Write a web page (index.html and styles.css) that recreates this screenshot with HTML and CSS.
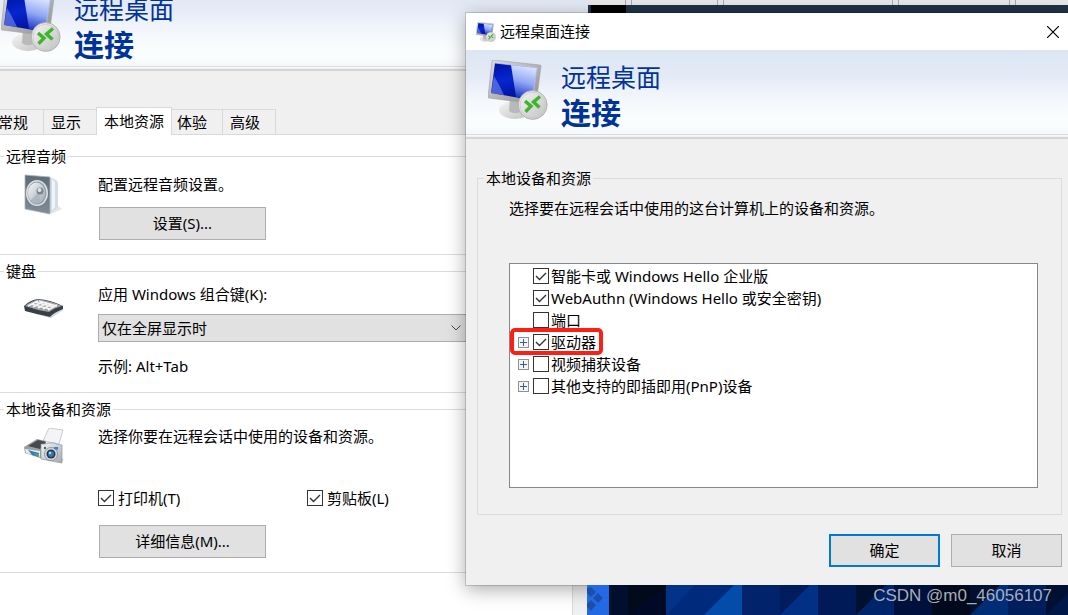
FILE: index.html
```
<!DOCTYPE html>
<html lang="zh-CN">

<head>
    <meta charset="UTF-8">
    <meta name="viewport" content="width=device-width, initial-scale=1.0">
    <title>远程桌面连接</title>
    <link rel="stylesheet" href="styles.css">
</head>

<body>
    <!-- 公用图标 -->
    <svg class="defs" width="0" height="0" aria-hidden="true">
        <defs>
            <linearGradient id="frame" x1="0" y1="0" x2="1" y2="1">
                <stop offset="0" stop-color="#dedede" />
                <stop offset="1" stop-color="#8c8c8c" />
            </linearGradient>
            <linearGradient id="blue" x1="0" y1="0" x2="0.4" y2="1">
                <stop offset="0" stop-color="#0012a0" />
                <stop offset="0.5" stop-color="#0626cf" />
                <stop offset="1" stop-color="#02109b" />
            </linearGradient>
            <linearGradient id="shine" x1="0.6" y1="0" x2="0.4" y2="1">
                <stop offset="0" stop-color="#dfe8ff" />
                <stop offset="0.5" stop-color="#8fa6f4" />
                <stop offset="1" stop-color="#1029c0" />
            </linearGradient>
            <linearGradient id="ball" x1="0" y1="0" x2="1" y2="1">
                <stop offset="0" stop-color="#f6f6f6" />
                <stop offset="1" stop-color="#c0c0c0" />
            </linearGradient>
            <linearGradient id="metal" x1="0" y1="0" x2="1" y2="1">
                <stop offset="0" stop-color="#f4f6f8" />
                <stop offset="1" stop-color="#a2aab3" />
            </linearGradient>
            <linearGradient id="slate" x1="0" y1="0" x2="0" y2="1">
                <stop offset="0" stop-color="#5f6c75" />
                <stop offset="1" stop-color="#7d8c97" />
            </linearGradient>
            <symbol id="rdp" viewBox="0 0 60 60">
                <ellipse cx="27" cy="50" rx="16" ry="9" fill="url(#ball)" />
                <path d="M22 38l14 4-2 9c-4 3-9 3-13 0z" fill="#b9b9b9" />
                <path d="M5 0L52 5q1 0 1 1L48 44 1 38q-1 0-1-1L4 1q0-1 1-1z" fill="url(#frame)" stroke="#a0a0a0" stroke-width="0.6" />
                <path d="M7 3L49 8 44 40 3 33z" fill="url(#blue)" />
                <path d="M23 5L49 8 44 40 28 37z" fill="url(#shine)" />
                <path d="M6 16q5 8 10 19L3 33z" fill="#7186e6" opacity="0.65" />
                <path d="M7 3L49 8 44 40" fill="none" stroke="#c5d3fb" stroke-width="0.7" />
                <circle cx="44.7" cy="45" r="14.4" fill="url(#ball)" stroke="#a8a8a8" stroke-width="0.8" />
                <circle cx="44.7" cy="45" r="12.6" fill="none" stroke="#c9c9c9" stroke-width="0.8" />
                <path d="M37 41l6 5.200-5.500 5.500M52 36.500l-6.500 5.500 6 5.500" fill="none" stroke="#3db52b" stroke-width="3.400" />
            </symbol>
        </defs>
    </svg>

    <div class="desktop">
        <svg class="wallpaper" width="481" height="30" aria-hidden="true">
            <rect width="481" height="30" fill="#001033" />
            <rect width="22" height="30" fill="#2469e4" />
            <path d="M4 2l5 5-5 5-4-4V3zM11 8l5 5-5 5-5-5zM4 15l5 5-5 6-4-4v-3z" fill="#1a4fac" />
            <rect x="22" width="19" height="30" fill="#000f2e" />
            <rect x="41" width="38" height="30" fill="#000a18" />
            <path d="M41 30L79 0v30z" fill="#000a26" />
            <rect x="79" width="76" height="30" fill="#002a7c" />
            <path d="M79 0h29L79 30z" fill="#013389" />
            <path d="M117 30L147 0h8v30z" fill="#044ca9" />
            <rect x="155" width="38" height="30" fill="#00236b" />
            <rect x="193" width="38" height="30" fill="#001c5c" />
            <path d="M193 30L223 0h8v30z" fill="#023084" />
            <rect x="231" width="38" height="30" fill="#001a58" />
            <rect x="269" width="38" height="30" fill="#001030" />
            <path d="M269 30L299 0h8v30z" fill="#00246a" />
            <rect x="307" width="38" height="30" fill="#00103c" />
            <rect x="345" width="38" height="30" fill="#000a1c" />
            <rect x="383" width="38" height="30" fill="#00102e" />
            <path d="M383 30L413 0h8v30z" fill="#002d76" />
            <rect x="421" width="38" height="30" fill="#001d5c" />
            <path d="M459 30L481 8v22z" fill="#001848" />
        </svg>
        <div class="topbar">
            <span class="slot"></span>
            <span class="slot"></span>
            <span class="slot wide"></span>
            <span class="slot"></span>
        </div>

        <main class="window main-window">
            <header class="banner">
                <svg class="logo"><use href="#rdp" /></svg>
                <h1>远程桌面<strong>连接</strong></h1>
            </header>
            <nav class="tabs">
                <button type="button">常规</button>
                <button type="button">显示</button>
                <button type="button" class="active">本地资源</button>
                <button type="button">体验</button>
                <button type="button">高级</button>
            </nav>
            <div class="panel">
                <fieldset class="audio">
                    <legend>远程音频</legend>
                    <div class="group">
                        <svg class="icon" width="40" height="42" viewBox="0 0 40 42">
                            <path d="M27 40l11-5-5-4z" fill="#e6e6e6" />
                            <path d="M26 3l6 3q2 1 2 4v23l-8 7z" fill="#d4dde6" />
                            <path d="M28 5l3 3v25l-3 4z" fill="#f0f4f8" />
                            <path d="M1 1l25 2v37L1 35z" fill="url(#slate)" stroke="#a8b5bf" stroke-width="0.8" />
                            <ellipse cx="13" cy="19" rx="11" ry="13" fill="#dce1e6" />
                            <ellipse cx="13" cy="19" rx="9.500" ry="11.500" fill="#939faa" />
                            <ellipse cx="12.500" cy="19" rx="8.500" ry="10.500" fill="url(#metal)" />
                            <path d="M15 18L6 27q4 4 10 1z" fill="#a4afba" opacity="0.7" />
                            <circle cx="16" cy="17" r="3.500" fill="#79848e" />
                            <circle cx="15.500" cy="16" r="2" fill="#dfe4e8" />
                        </svg>
                        <div>
                            <p>配置远程音频设置。</p>
                            <button type="button" class="btn">设置(S)...</button>
                        </div>
                    </div>
                </fieldset>
                <fieldset class="keyboard">
                    <legend>键盘</legend>
                    <div class="group">
                        <svg class="icon" width="40" height="20" viewBox="0 0 40 20">
                            <path d="M6 15l20 4 13-9v2L27 20z" fill="#cbd3e8" />
                            <path d="M0 8Q6 2 14 1q13 1 25 7v3q-8 3-13 8Q12 16 1 13z" fill="#3a3f46" />
                            <path d="M1 8Q7 3 14 1.500q12 1 24 6.500-8 2-13 6Q12 12 1 8z" fill="#9ba1a6" />
                            <path d="M4 8l10-5M9 9l9-5M14 10l9-5M19 11l9-5M24 12l9-5M7 6l19 5M11 4l19 5M15 3l18 5" stroke="#f4f4f4" stroke-width="1.600" fill="none" />
                        </svg>
                        <div>
                            <label for="combo">应用 Windows 组合键(K):</label>
                            <select id="combo">
                                <option>仅在全屏显示时</option>
                                <option>在这台计算机上</option>
                                <option>在远程计算机上</option>
                            </select>
                            <p>示例: Alt+Tab</p>
                        </div>
                    </div>
                </fieldset>
                <fieldset class="devices">
                    <legend>本地设备和资源</legend>
                    <div class="group">
                        <svg class="icon" width="40" height="36" viewBox="0 0 40 36">
                            <path d="M25 0l14 2-4 14-16-3z" fill="#f3f4f5" stroke="#b4b8bc" stroke-width="0.700" />
                            <path d="M0 19l13-8 9 2-3 18-18-6z" fill="#9a9ea3" />
                            <path d="M4 18l10-6 8 2-6 7z" fill="#45494e" />
                            <path d="M1 21l15 2v6L2 25z" fill="#e8ebee" />
                            <path d="M4 22l11 3v4L8 27z" fill="#2d7fbb" />
                            <path d="M9 25l6 1v3z" fill="#57a86b" />
                            <path d="M34 35l6-3-3-2z" fill="#cfcfcf" />
                            <path d="M17 16l5 0 1-1 8 0 1 1 6 1v18L17 31z" fill="url(#metal)" stroke="#8d959d" stroke-width="0.700" />
                            <circle cx="27" cy="26" r="6.500" fill="#d5dade" stroke="#7f8890" stroke-width="0.800" />
                            <circle cx="27" cy="26" r="4.500" fill="#29343f" />
                            <circle cx="27" cy="26" r="3" fill="#2f78bd" />
                            <circle cx="26" cy="25" r="1.200" fill="#b9dcf6" />
                            <path d="M30 19l4 0v3l-4-1z" fill="#3c83c4" />
                            <circle cx="21" cy="20" r="1.200" fill="#59626b" />
                        </svg>
                        <div>
                            <p>选择你要在远程会话中使用的设备和资源。</p>
                            <div class="checks">
                                <label><input type="checkbox" checked>打印机(T)</label>
                                <label><input type="checkbox" checked>剪贴板(L)</label>
                            </div>
                            <button type="button" class="btn">详细信息(M)...</button>
                        </div>
                    </div>
                </fieldset>
            </div>
        </main>

        <section class="window dialog">
            <div class="titlebar">
                <svg class="mini"><use href="#rdp" /></svg>
                <span>远程桌面连接</span>
                <button type="button" class="close" aria-label="关闭">
                    <svg width="12" height="12" viewBox="0 0 12 12"><path d="M0 0l12 12M12 0L0 12" stroke="#000" stroke-width="1.200" /></svg>
                </button>
            </div>
            <header class="banner">
                <svg class="logo"><use href="#rdp" /></svg>
                <h2>远程桌面<strong>连接</strong></h2>
            </header>
            <div class="content">
                <fieldset>
                    <legend>本地设备和资源</legend>
                    <div class="resources">
                        <p>选择要在远程会话中使用的这台计算机上的设备和资源。</p>
                        <ul class="tree">
                            <li><label><input type="checkbox" checked>智能卡或 Windows Hello 企业版</label></li>
                            <li><label><input type="checkbox" checked>WebAuthn (Windows Hello 或安全密钥)</label></li>
                            <li><label><input type="checkbox">端口</label></li>
                            <li class="marked"><button type="button" class="expand" aria-label="展开"></button><label><input type="checkbox" checked>驱动器</label></li>
                            <li><button type="button" class="expand" aria-label="展开"></button><label><input type="checkbox">视频捕获设备</label></li>
                            <li><button type="button" class="expand" aria-label="展开"></button><label><input type="checkbox">其他支持的即插即用(PnP)设备</label></li>
                        </ul>
                    </div>
                </fieldset>
                <div class="actions">
                    <button type="button" class="btn primary">确定</button>
                    <button type="button" class="btn">取消</button>
                </div>
            </div>
        </section>

        <span class="watermark">CSDN @m0_46056107</span>
    </div>
</body>

</html>
```

FILE: styles.css
```
* {
    padding: 0;
    margin: 0;
    box-sizing: border-box;
}

body,
button,
select {
    font: 15px/20px "Noto Sans", "Noto Sans CJK SC", sans-serif;
    color: #000;
}

ul {
    list-style: none;
}

.defs {
    position: absolute;
}

/* 桌面 */
.desktop {
    position: relative;
    height: 100vh;
    overflow: hidden;
    background-color: #1e3244;
}

.wallpaper {
    position: absolute;
    left: 587px;
    bottom: 0;
    z-index: 3;
}

.topbar {
    position: absolute;
    top: 0;
    left: 587px;
    right: 0;
    height: 13px;
    display: flex;
    gap: 85px;
    padding-left: 38px;
    border-bottom: 8px solid #1f3346;
    background-color: #e6e7e9;
}

.topbar::after {
    content: "";
    position: absolute;
    top: 5px;
    left: 4px;
    width: 35px;
    height: 8px;
    background-color: #000;
}

.slot {
    width: 7px;
    border: 1px solid #aaa;
    border-width: 0 1px;
}

.slot.wide {
    margin-left: 83px;
    margin-right: 25px;
}

/* 窗口 */
.window {
    position: absolute;
    background-color: #f0f0f0;
}

.main-window {
    top: -18px;
    left: -21px;
    bottom: -20px;
    width: 57%;
    display: flex;
    flex-direction: column;
}

.dialog {
    top: 13px;
    left: 466px;
    right: 0;
    z-index: 2;
    box-shadow: 0 0 0 1px rgba(0, 0, 0, .15), 0 4px 18px rgba(0, 0, 0, .35);
}

.banner {
    display: flex;
    height: 89px;
    padding: 10px 22px;
    gap: 13px;
    background: linear-gradient(#dce6f3 0, #e4eaf6 26px, #f1f5fb 45px, #fafdfd 66px, #fafdfd 76px, #f3f8fd 84px, #dcdcdc 84px, #dcdcdc 85px, #fafafa 85px, #f0f0f0 87px, #d4d4d4 87px, #d4d4d4 89px);
}

.logo {
    width: 60px;
    height: 60px;
}

.banner h1,
.banner h2 {
    font-size: 25px;
    font-weight: 400;
    line-height: 34px;
    color: #039;
}

.banner strong {
    display: block;
    font-size: 30px;
    line-height: 38px;
}

/* 选项卡 */
.tabs {
    display: flex;
    align-items: flex-end;
    padding: 36px 0 0 12px;
}

.tabs button {
    height: 25px;
    padding: 0 15px 0 7px;
    border: 1px solid #d9d9d9;
    border-width: 1px 1px 0 0;
    background-color: #f0f0f0;
    white-space: nowrap;
}

.tabs .active {
    position: relative;
    height: 28px;
    margin: 0 -2px -1px -1px;
    padding: 0 7px 2px;
    border-left-width: 1px;
    background-color: #fff;
}

.panel {
    flex: 1;
    display: flex;
    flex-direction: column;
    gap: 6px;
    margin-right: 15px;
    padding: 11px 11px 0 12px;
    border: 1px solid #d9d9d9;
    background-color: #fff;
}

fieldset {
    min-width: 0;
    border: 1px solid #dcdcdc;
}

legend {
    padding: 0 2px;
}

.panel fieldset {
    padding: 0 11px 14px;
}

.group {
    display: grid;
    grid-template-columns: 74px 1fr;
    padding-left: 20px;
}

.audio .group {
    padding-top: 8px;
}

.keyboard .group {
    padding-top: 3px;
    padding-bottom: 2px;
}

.devices .group {
    padding-top: 7px;
}

.keyboard .icon {
    margin-top: 14px;
}

.devices .icon {
    margin-top: 2px;
}

.btn {
    display: block;
    height: 33px;
    padding-bottom: 2px;
    border: 1px solid #adadad;
    background-color: #e1e1e1;
}

.panel .btn {
    width: 167px;
    margin-left: 1px;
}

.audio p {
    margin-bottom: 13px;
}

select {
    display: block;
    width: 369px;
    height: 28px;
    margin: 10px 0 14px;
    padding: 0 3px;
    border: 1px solid #adadad;
    border-radius: 0;
    appearance: none;
    background: #e1e1e1 url("data:image/svg+xml,%3Csvg xmlns='http://www.w3.org/2000/svg' width='10' height='6'%3E%3Cpath d='M.5.5L5 5 9.500.5' fill='none' stroke='%23444'/%3E%3C/svg%3E") no-repeat right 5px center;
}

.checks {
    display: grid;
    grid-template-columns: 209px 1fr;
    margin: 42px 0 17px;
}

label {
    display: flex;
    align-items: center;
    white-space: nowrap;
}

.checks label {
    gap: 4px;
}

input[type="checkbox"] {
    flex: none;
    width: 16px;
    height: 16px;
    border: 1px solid #333;
    appearance: none;
    background-color: #fff;
}

input[type="checkbox"]:checked {
    background-image: url("data:image/svg+xml,%3Csvg xmlns='http://www.w3.org/2000/svg' width='14' height='14'%3E%3Cpath d='M2 7l3.500 3.500L12 4' fill='none' stroke='%23333' stroke-width='1.400'/%3E%3C/svg%3E");
}

/* 对话框 */
.titlebar {
    display: flex;
    align-items: center;
    height: 37px;
    padding: 0 9px 0 10px;
    background-color: #fff;
}

.titlebar span {
    padding-bottom: 2px;
}

.mini {
    width: 20px;
    height: 20px;
    margin-right: 4px;
}

.close {
    width: 12px;
    height: 12px;
    margin-left: auto;
    border: 0;
    background: none;
}

.close svg {
    display: block;
}

.content {
    padding: 29px 6px 18px 11px;
}

.content fieldset {
    padding: 0 23px 26px 6px;
}

.resources {
    padding: 10px 0 0 25px;
}

.tree {
    height: 225px;
    margin-top: 45px;
    padding-top: 1px;
    border: 1px solid #828790;
    background-color: #fff;
}

.tree li {
    position: relative;
    width: fit-content;
    height: 22px;
    padding-left: 23px;
}

.tree label {
    height: 22px;
    gap: 2px;
}

.expand {
    position: absolute;
    top: 6px;
    left: 8px;
    width: 11px;
    height: 11px;
    border: 1px solid #919191;
    background: linear-gradient(#3c5a9a, #3c5a9a) center / 7px 1px no-repeat, linear-gradient(#3c5a9a, #3c5a9a) center / 1px 7px no-repeat, #f4f4f4;
}

.tree .marked::after {
    content: "";
    position: absolute;
    top: -3px;
    right: -7px;
    bottom: -2px;
    left: 0;
    border: 4px solid #fc2014;
    border-radius: 5px;
}

.actions {
    display: flex;
    justify-content: flex-end;
    gap: 11px;
    margin-top: 19px;
}

.actions .btn {
    width: 111px;
}

.actions .primary {
    border: 2px solid #0078d7;
}

.watermark {
    position: absolute;
    right: 16px;
    bottom: 9px;
    z-index: 4;
    font: 17px/20px "Liberation Sans", sans-serif;
    color: #a9adb8;
}
```
